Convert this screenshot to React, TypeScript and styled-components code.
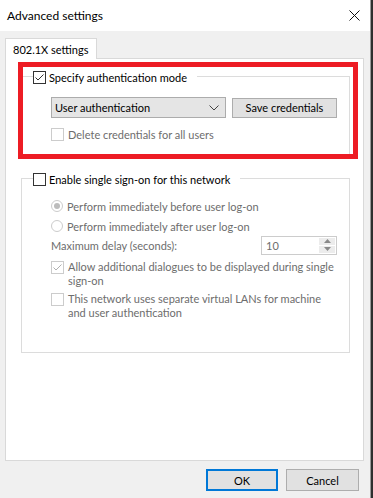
import React from "react";
import styled, { createGlobalStyle } from "styled-components";

const GlobalStyle = createGlobalStyle`
  html, body {
    margin: 0;
    padding: 0;
    background: #2e2e2e;
  }
  body {
    font-family: Lato, "Liberation Sans", Arial, sans-serif;
    font-size: 11px;
    color: #000;
  }
`;

const Screen = styled.div`
  display: flex;
  width: 373px;
  height: 498px;
  overflow: hidden;
`;

const Window = styled.div`
  position: relative;
  width: 370px;
  height: 498px;
  background: #f0f0f0;
  border-right: 1px solid #9a9a9a;
  display: flex;
  flex-direction: column;
`;

const TitleBar = styled.header`
  height: 31px;
  flex-shrink: 0;
  background: #fff;
  display: flex;
  align-items: center;
  justify-content: space-between;
  padding: 0 10px 0 7px;
  font-size: 12px;
`;

const CloseButton = styled.span`
  width: 12px;
  height: 12px;
  display: flex;
  align-items: center;
  justify-content: center;
`;

const Body = styled.div`
  padding: 7px 6px 0 5px;
  display: flex;
  flex-direction: column;
`;

const TabStrip = styled.div`
  display: flex;
  height: 20px;
`;

const Tab = styled.div`
  width: 92px;
  box-sizing: border-box;
  height: 21px;
  background: #fff;
  border: 1px solid #d9d9d9;
  border-bottom: none;
  padding-left: 7px;
  display: flex;
  align-items: center;
  position: relative;
  z-index: 1;
`;

const Panel = styled.div`
  box-sizing: border-box;
  height: 403px;
  background: #fff;
  border: 1px solid #d9d9d9;
  padding: 17px 0 0 15px;
  display: flex;
  flex-direction: column;
`;

const GroupBox = styled.div<{ $top?: number; $bottom: number }>`
  width: 329px;
  box-sizing: border-box;
  border: 1px solid #dcdcdc;
  margin-top: ${(p) => p.$top ?? 0}px;
  padding: 0 12px ${(p) => p.$bottom}px 29px;
  display: flex;
  flex-direction: column;
`;

const Legend = styled.div`
  display: flex;
  align-items: center;
  gap: 3px;
  height: 15px;
  width: fit-content;
  margin: -7px 0 0 -18px;
  padding-right: 10px;
  background: #fff;
  white-space: nowrap;
`;

const Box = styled.span<{ $disabled?: boolean }>`
  width: 13px;
  height: 13px;
  box-sizing: border-box;
  flex-shrink: 0;
  border: 1px solid ${(p) => (p.$disabled ? "#cccccc" : "#333333")};
  background: #fff;
  display: flex;
  align-items: center;
  justify-content: center;
`;

const Round = styled.span<{ $on?: boolean }>`
  width: 12px;
  height: 12px;
  box-sizing: border-box;
  border-radius: 50%;
  flex-shrink: 0;
  border: 1px solid #cccccc;
  background: #fff;
  display: flex;
  align-items: center;
  justify-content: center;
  &::after {
    content: "";
    width: 6px;
    height: 6px;
    border-radius: 50%;
    background: ${(p) => (p.$on ? "#bcbcbc" : "transparent")};
  }
`;

const Row = styled.div<{ $h: number; $top?: number }>`
  display: flex;
  align-items: center;
  gap: 4px;
  height: ${(p) => p.$h}px;
  margin-top: ${(p) => p.$top ?? 0}px;
  white-space: nowrap;
`;

const Item = styled.div<{ $top: number }>`
  display: flex;
  align-items: flex-start;
  gap: 4px;
  margin-top: ${(p) => p.$top}px;
  line-height: 14px;
  white-space: nowrap;
  ${Box} {
    margin-top: 1px;
  }
`;

const Dim = styled.span`
  color: #6d6d6d;
`;

const Select = styled.div`
  width: 181px;
  height: 21px;
  box-sizing: border-box;
  background: #e5e5e5;
  border: 1px solid #acacac;
  display: flex;
  align-items: center;
  justify-content: space-between;
  padding: 0 6px 0 3px;
`;

const Button = styled.div<{ $w: number; $h: number; $primary?: boolean }>`
  width: ${(p) => p.$w}px;
  height: ${(p) => p.$h}px;
  box-sizing: border-box;
  background: #e1e1e1;
  border: ${(p) => (p.$primary ? "2px solid #0078d7" : "1px solid #adadad")};
  display: flex;
  align-items: center;
  justify-content: center;
`;

const CredRow = styled.div`
  display: flex;
  align-items: center;
  gap: 6px;
  margin-top: 12px;
`;

const Spinner = styled.div`
  margin-left: auto;
  width: 76px;
  height: 19px;
  box-sizing: border-box;
  border: 1px solid #cccccc;
  background: #fff;
  display: flex;
  color: #6d6d6d;
`;

const SpinValue = styled.span`
  flex: 1;
  padding-left: 4px;
  display: flex;
  align-items: center;
`;

const SpinButtons = styled.div`
  width: 16px;
  display: flex;
  flex-direction: column;
  gap: 1px;
  padding: 1px 1px 1px 0;
`;

const SpinButton = styled.span`
  flex: 1;
  background: #ececec;
  display: flex;
  align-items: center;
  justify-content: center;
`;

const Footer = styled.footer`
  display: flex;
  justify-content: flex-end;
  gap: 8px;
  padding: 8px 5px 0 0;
`;

const Annotation = styled.div`
  position: absolute;
  left: 18px;
  top: 62px;
  width: 340px;
  height: 97px;
  box-sizing: border-box;
  border: 5px solid #ed1c24;
  pointer-events: none;
`;

function Check({ on, disabled }: { on?: boolean; disabled?: boolean }) {
  return (
    <Box $disabled={disabled}>
      {on && (
        <svg width="11" height="11" viewBox="0 0 11 11">
          <polyline
            points="1.5,5.5 4,8 9.5,2.5"
            fill="none"
            stroke={disabled ? "#b0b0b0" : "#333"}
            strokeWidth="1"
          />
        </svg>
      )}
    </Box>
  );
}

function App() {
  return (
    <Screen>
      <GlobalStyle />
      <Window>
        <TitleBar>
          <span>Advanced settings</span>
          <CloseButton>
            <svg width="11" height="11" viewBox="0 0 11 11">
              <path d="M0.5 0.5 L10.5 10.5 M10.5 0.5 L0.5 10.5" stroke="#111" strokeWidth="1" />
            </svg>
          </CloseButton>
        </TitleBar>
        <Body>
          <TabStrip>
            <Tab>802.1X settings</Tab>
          </TabStrip>
          <Panel>
            <GroupBox $bottom={15}>
              <Legend>
                <Check on />
                Specify authentication mode
              </Legend>
              <CredRow>
                <Select>
                  User authentication
                  <svg width="10" height="6" viewBox="0 0 10 6">
                    <polyline points="0.5,0.5 5,5 9.5,0.5" fill="none" stroke="#444" strokeWidth="1" />
                  </svg>
                </Select>
                <Button $w={109} $h={20}>Save credentials</Button>
              </CredRow>
              <Row $h={15} $top={9}>
                <Check disabled />
                <Dim>Delete credentials for all users</Dim>
              </Row>
            </GroupBox>

            <GroupBox $top={20} $bottom={32}>
              <Legend>
                <Check />
                Enable single sign-on for this network
              </Legend>
              <Row $h={20} $top={9}>
                <Round $on />
                <Dim>Perform immediately before user log-on</Dim>
              </Row>
              <Row $h={20}>
                <Round />
                <Dim>Perform immediately after user log-on</Dim>
              </Row>
              <Row $h={18}>
                <Dim>Maximum delay (seconds):</Dim>
                <Spinner>
                  <SpinValue>10</SpinValue>
                  <SpinButtons>
                    <SpinButton>
                      <svg width="7" height="4" viewBox="0 0 7 4">
                        <polygon points="3.5,0 7,4 0,4" fill="#8a8a8a" />
                      </svg>
                    </SpinButton>
                    <SpinButton>
                      <svg width="7" height="4" viewBox="0 0 7 4">
                        <polygon points="0,0 7,0 3.5,4" fill="#8a8a8a" />
                      </svg>
                    </SpinButton>
                  </SpinButtons>
                </Spinner>
              </Row>
              <Item $top={6}>
                <Check on disabled />
                <Dim>
                  Allow additional dialogues to be displayed during single
                  <br />
                  sign-on
                </Dim>
              </Item>
              <Item $top={4}>
                <Check disabled />
                <Dim>
                  This network uses separate virtual LANs for machine
                  <br />
                  and user authentication
                </Dim>
              </Item>
            </GroupBox>
          </Panel>
          <Footer>
            <Button $w={72} $h={22} $primary>OK</Button>
            <Button $w={73} $h={22}>Cancel</Button>
          </Footer>
        </Body>
        <Annotation />
      </Window>
    </Screen>
  );
}

export default App;
